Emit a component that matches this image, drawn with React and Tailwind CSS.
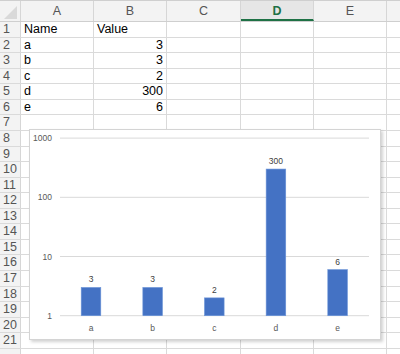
import React from 'react';

const COLS = [
  { key: 'A', w: 'w-[73px]' },
  { key: 'B', w: 'w-[73px]' },
  { key: 'C', w: 'w-[74px]' },
  { key: 'D', w: 'w-[73px]' },
  { key: 'E', w: 'w-[73px]' },
];

const DATA = [
  ['Name', 'Value'],
  ['a', 3],
  ['b', 3],
  ['c', 2],
  ['d', 300],
  ['e', 6],
];

const ROWS = Array.from({ length: 21 }, (_, i) => i + 1);

const BASE_Y = 316.7;
const DECADE = 59.2;
const yOf = (v) => BASE_Y - Math.log10(v) * DECADE;

const Chart = () => {
  const points = DATA.slice(1);
  return (
    <div className="absolute left-[29px] top-[129px] w-[352px] h-[211px] bg-white border border-[#d4d4d4] shadow-[2px_2px_3px_rgba(0,0,0,0.18)]">
      <svg width="352" height="211" viewBox="30 130 352 211" className="absolute left-[-1px] top-[-1px]" style={{ fontFamily: '"Liberation Sans", Arial, sans-serif' }}>
        {[1000, 100, 10, 1].map((t) => (
          <g key={t}>
            <line x1="61" x2="370" y1={yOf(t)} y2={yOf(t)} stroke="#d9d9d9" strokeWidth="1" />
            <text x="53" y={yOf(t) + 3} textAnchor="end" fontSize="8.5" fill="#595959">{t}</text>
          </g>
        ))}
        {points.map(([name, v], i) => {
          const cx = 92 + i * 61.65;
          const top = yOf(v);
          return (
            <g key={name}>
              <rect x={cx - 9.8} y={top} width="19.6" height={BASE_Y - top} fill="#4472c4" stroke="#6a93d8" strokeWidth="0.6" />
              <text x={cx} y={top - 5} textAnchor="middle" fontSize="8.5" fill="#404040">{v}</text>
              <text x={cx} y="332" textAnchor="middle" fontSize="8.5" fill="#595959">{name}</text>
            </g>
          );
        })}
      </svg>
    </div>
  );
};

export default function App() {
  return (
    <div className="relative w-[400px] h-[354px] overflow-hidden bg-white text-[12.5px] text-black" style={{ fontFamily: '"Liberation Sans", Arial, sans-serif' }}>
      <div className="flex h-[22px] border-t border-b border-[#cfcfcf] bg-[#f3f3f3]">
        <div className="relative w-[21px] shrink-0 border-r border-[#d6d6d6]">
          <div className="absolute left-[4px] top-[5px] w-[13px] h-[13px] bg-[#d9d9d9] [clip-path:polygon(100%_0,100%_100%,0_100%)]" />
        </div>
        {COLS.map((c) => (
          <div
            key={c.key}
            className={`${c.w} shrink-0 flex items-center justify-center border-r border-[#d6d6d6] ${c.key === 'D' ? 'bg-[#e6e6e6] text-[#1e7145] font-bold border-b-2 border-b-[#1e7145] pt-[2px]' : 'text-[#555555]'}`}
          >
            {c.key}
          </div>
        ))}
        <div className="flex-1" />
      </div>
      {ROWS.map((r) => {
        const row = DATA[r - 1];
        return (
          <div key={r} className="flex h-[15.57px] border-b border-[#dadada]">
            <div className="w-[21px] shrink-0 bg-[#f3f3f3] border-r border-[#d6d6d6] pl-[3px] text-[#555555] leading-[15px]">{r}</div>
            {COLS.map((c, ci) => {
              let val = '';
              if (row && ci < 2) val = row[ci];
              const right = typeof val === 'number';
              return (
                <div key={c.key} className={`${c.w} shrink-0 border-r border-[#dadada] px-[3px] leading-[15px] ${right ? 'text-right' : 'text-left'}`}>
                  {val}
                </div>
              );
            })}
            <div className="flex-1" />
          </div>
        );
      })}
      <div className="flex h-[6px]">
        <div className="w-[21px] shrink-0 bg-[#f3f3f3] border-r border-[#d6d6d6]" />
        {COLS.map((c) => (
          <div key={c.key} className={`${c.w} shrink-0 border-r border-[#dadada]`} />
        ))}
      </div>
      <Chart />
    </div>
  );
}
